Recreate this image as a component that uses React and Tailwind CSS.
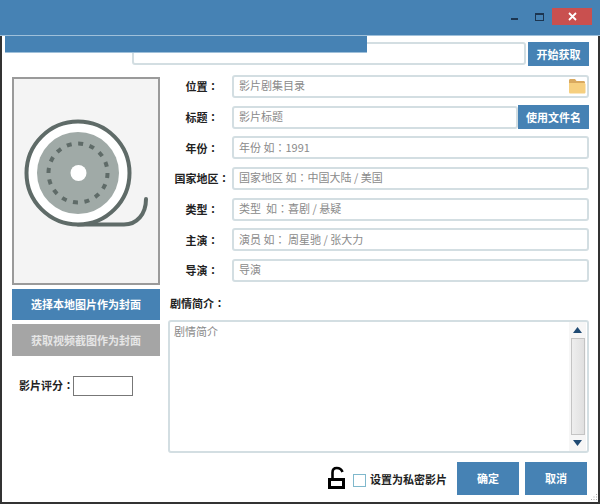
const boxCls = "h-[23px] border-2 border-[#d3dee2] rounded-[3px] bg-white pl-[5px] pb-[2px] flex items-center text-[11px] text-[#8a8a8a] whitespace-pre";

function C() {
  return <span style={{ fontFamily: '"Noto Sans CJK TC", sans-serif' }}>：</span>;
}

function Reel() {
  return (
    <svg width="144" height="205" viewBox="14 79 144 205" className="block">
      <path d="M78 224.5H124C137 224.5 146 214 146 199" fill="none" stroke="#5f6b68" strokeWidth="4" strokeLinecap="round" />
      <circle cx="78" cy="173" r="51.5" fill="#ffffff" stroke="#5f6b68" strokeWidth="4" />
      <circle cx="78" cy="173" r="41" fill="#a0aaa7" />
      <circle cx="78" cy="173" r="29.5" fill="none" stroke="#5f6b68" strokeWidth="4" strokeDasharray="5 6.58" />
      <circle cx="78.5" cy="173" r="8" fill="#ffffff" />
    </svg>
  );
}

function Folder() {
  return (
    <svg width="18" height="16" viewBox="0 0 18 16" className="block">
      <path d="M1 2.5C1 1.5 1.6 1 2.5 1H7L8.5 3H15.5C16.5 3 17 3.6 17 4.5V5H1Z" fill="#d9a95f" />
      <path d="M1 5H16C17 5 17.5 5.5 17.5 6.5V14C17.5 15 17 15.5 16 15.5H2.5C1.5 15.5 1 15 1 14Z" fill="#f6cf7f" />
    </svg>
  );
}

function Lock() {
  return (
    <svg width="20" height="24" viewBox="0 0 20 24" className="block">
      <path d="M2.5 13.5H16.5V21.5H2.5Z" fill="none" stroke="#000" strokeWidth="3" />
      <path d="M5.5 13V6.5C5.5 3.8 7.2 2 9.8 2C12.5 2 14.6 3.5 15.5 6" fill="none" stroke="#000" strokeWidth="2.6" />
    </svg>
  );
}

function Row({ label, children }) {
  return (
    <div className="flex items-center h-[23px]">
      <div className="w-[62px] shrink-0 pl-[6px] text-[11px] font-bold text-[#222222] whitespace-nowrap text-center">{label}<C /></div>
      {children}
    </div>
  );
}

export default function App() {
  return (
    <div
      className="relative w-[600px] h-[504px] overflow-hidden bg-white flex flex-col border-b-2 border-[#333333]"
      style={{ fontFamily: '"Noto Sans CJK SC", "Liberation Sans", sans-serif' }}
    >
      <div className="h-[36px] shrink-0 bg-[#4682b4] border-b border-[#9fc0da] flex items-start justify-end pr-[8px]">
        <div className="mt-[18px] w-[7px] h-[2px] bg-[#1c3550] mr-[17px]" />
        <div className="mt-[13px] w-[9px] h-[8px] border border-[#1c3550] border-t-[2px] mr-[8px]" />
        <div className="mt-[8px] w-[40px] h-[17px] bg-[#c9504f] flex items-center justify-center">
          <svg width="9" height="9" viewBox="0 0 9 9"><path d="M1 1L8 8M8 1L1 8" stroke="#fff" strokeWidth="1.8" /></svg>
        </div>
      </div>

      <div className="absolute left-[5px] top-[36px] w-[362px] h-[17px] bg-[#4682b4] border-b border-[#9fc0da]" />

      <div className="flex-1 flex flex-col border-l-2 border-r-2 border-[#333333] min-h-0">
        <div className="flex justify-end h-[24px] mt-[6px] pr-[9px] gap-[2px]">
          <div className="w-[394px] h-[23px] border-2 border-[#d3dee2] rounded-[3px]" />
          <button className="w-[61px] h-[24px] bg-[#4682b4] text-white text-[11px] font-bold">开始获取</button>
        </div>

        <div className="flex mt-[11px] pl-[10px] pr-[9px]">
          <div className="w-[148px] shrink-0 flex flex-col">
            <div className="h-[208px] border-2 border-[#9a9a9a] bg-[#f4f4f4]">
              <Reel />
            </div>
            <button className="mt-[4px] h-[31px] bg-[#4682b4] text-white text-[11px] font-bold">选择本地图片作为封面</button>
            <button className="mt-[4px] h-[32px] bg-[#a5a5a5] text-[#e6e6e6] text-[11px] font-bold">获取视频截图作为封面</button>
            <div className="flex items-center mt-[20px] pl-[7px] gap-[1px]">
              <span className="text-[11px] font-bold text-[#222222] w-[53px] pb-[2px] whitespace-nowrap">影片评分<C /></span>
              <div className="w-[60px] h-[20px] border border-[#777777] bg-white" />
            </div>
          </div>

          <div className="flex-1 min-w-0 pl-[8px] -mt-[2px] flex flex-col">
            <div className="flex flex-col gap-[7.67px]">
              <Row label="位置">
                <div className={boxCls + " relative flex-1 ml-[2px]"}>
                  影片剧集目录
                  <div className="absolute right-[1px] top-[1px]"><Folder /></div>
                </div>
              </Row>
              <Row label="标题">
                <div className={boxCls + " flex-1 min-w-0 ml-[2px]"}>影片标题</div>
                <button className="w-[71px] h-[24px] bg-[#4682b4] text-white text-[11px] font-bold">使用文件名</button>
              </Row>
              <Row label="年份"><div className={boxCls + " flex-1 min-w-0 ml-[2px]"}>年份 如<C />1991</div></Row>
              <Row label="国家地区"><div className={boxCls + " flex-1 min-w-0 ml-[2px]"}>国家地区 如<C />中国大陆 / 美国</div></Row>
              <Row label="类型"><div className={boxCls + " flex-1 min-w-0 ml-[2px]"}>类型  如<C />喜剧 / 悬疑</div></Row>
              <Row label="主演"><div className={boxCls + " flex-1 min-w-0 ml-[2px]"}>演员 如<C /> 周星驰 / 张大力</div></Row>
              <Row label="导演"><div className={boxCls + " flex-1 min-w-0 ml-[2px]"}>导演</div></Row>
            </div>

            <div className="mt-[13px] pl-[2px] text-[11px] font-bold text-[#222222] leading-[17px]">剧情简介<C /></div>
            <div className="mt-[8px] h-[133px] border-2 border-[#d3dee2] rounded-[3px] flex">
              <div className="flex-1 px-[4px] py-[1px] text-[11px] text-[#8a8a8a]">剧情简介</div>
              <div className="w-[17px] mr-[1px] flex flex-col items-center bg-[#f6f6f6]">
                <div className="h-[16px] flex items-center justify-center">
                  <svg width="9" height="6" viewBox="0 0 9 6"><path d="M4.5 0L9 6H0Z" fill="#1f4a73" /></svg>
                </div>
                <div className="flex-1 w-[14px] border border-[#c4c4c4] bg-[linear-gradient(to_right,#eeeeee,#e0e0e0)]" />
                <div className="h-[16px] flex items-center justify-center">
                  <svg width="9" height="6" viewBox="0 0 9 6"><path d="M4.5 6L9 0H0Z" fill="#1f4a73" /></svg>
                </div>
              </div>
            </div>
          </div>
        </div>

        <div className="flex items-start justify-end mt-[9px] pr-[11px]">
          <div className="mt-[4px] mr-[6px]"><Lock /></div>
          <div className="mt-[12px] w-[13px] h-[13px] border border-[#7fb8cc] mr-[4px]" />
          <div className="mt-[8px] w-[77px] text-[11px] leading-[18px] font-bold text-[#222222] whitespace-nowrap mr-[10px]">设置为私密影片</div>
          <button className="w-[62px] h-[33px] bg-[#4682b4] text-white text-[11px] font-bold mr-[6px]">确定</button>
          <button className="w-[62px] h-[33px] bg-[#4682b4] text-white text-[11px] font-bold">取消</button>
        </div>
      </div>

      <svg width="8" height="8" viewBox="0 0 8 8" className="absolute right-[2px] bottom-[1px]">
        <path d="M6 1h1v1H6zM3.5 3.5h1v1h-1zM6 3.5h1v1H6zM1 6h1v1H1zM3.5 6h1v1h-1zM6 6h1v1H6z" fill="#a8a8a8" />
      </svg>
    </div>
  );
}
